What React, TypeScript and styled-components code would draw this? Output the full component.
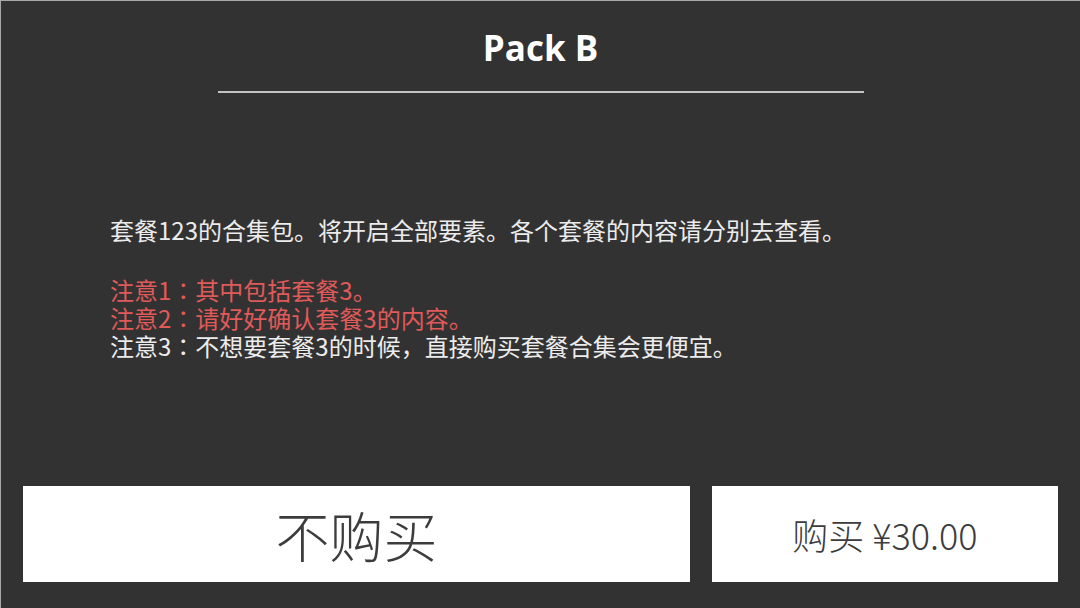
import styled, { createGlobalStyle } from 'styled-components';

const GlobalStyle = createGlobalStyle`
  html, body {
    margin: 0;
    padding: 0;
    background: #323232;
  }
  * {
    box-sizing: border-box;
  }
`;

const Panel = styled.div`
  width: 1080px;
  height: 608px;
  display: flex;
  flex-direction: column;
  background: #323232;
  border-top: 1px solid #a8a8a8;
  border-left: 1px solid #a8a8a8;
  font-family: "Noto Sans CJK SC", "Noto Sans", sans-serif;
`;

const Header = styled.div`
  display: flex;
  flex-direction: column;
  align-items: center;
  padding-top: 23px;
`;

const Title = styled.h1`
  margin: 0;
  font-family: "Open Sans", "Noto Sans", sans-serif;
  font-weight: 700;
  font-size: 35px;
  line-height: 48px;
  color: #ffffff;
`;

const Rule = styled.div`
  width: 646px;
  height: 2px;
  margin-top: 19px;
  background: #c4c4c4;
`;

const Body = styled.div`
  flex: 1;
  display: flex;
  flex-direction: column;
  justify-content: center;
  padding: 0 0 4px 109px;
`;

const Para = styled.p<{ $gap?: number }>`
  margin: 0 0 ${p => p.$gap ?? 0}px 0;
  font-size: 24px;
  line-height: 28px;
  color: #ececec;
`;

const Line = styled.div<{ $warn?: boolean }>`
  font-size: 24px;
  line-height: 28px;
  color: ${p => (p.$warn ? '#e05a5a' : '#ececec')};
`;

// centred full-width colon, as in the reference
const Colon = styled.span`
  font-family: "Noto Sans CJK JP", "Noto Sans CJK SC", sans-serif;
`;

const Actions = styled.div`
  display: flex;
  gap: 22px;
  padding: 0 22px 26px 22px;
`;

const ActionButton = styled.button<{ $wide?: boolean; $size: number }>`
  flex: ${p => (p.$wide ? '0 0 667px' : '1')};
  height: 96px;
  border: none;
  border-radius: 0;
  background: #ffffff;
  color: #3c3c3c;
  font-family: "Noto Sans CJK SC", "Noto Sans", sans-serif;
  font-weight: 300;
  font-size: ${p => p.$size}px;
  display: flex;
  align-items: center;
  justify-content: center;
  padding: 0;
  cursor: pointer;
`;

export default function App() {
  return (
    <>
      <GlobalStyle />
      <Panel>
        <Header>
          <Title>Pack B</Title>
          <Rule />
        </Header>
        <Body>
          <Para $gap={32}>套餐123的合集包。将开启全部要素。各个套餐的内容请分别去查看。</Para>
          <Line $warn>注意1<Colon>：</Colon>其中包括套餐3。</Line>
          <Line $warn>注意2<Colon>：</Colon>请好好确认套餐3的内容。</Line>
          <Line>注意3<Colon>：</Colon>不想要套餐3的时候，直接购买套餐合集会更便宜。</Line>
        </Body>
        <Actions>
          <ActionButton $wide $size={54}>不购买</ActionButton>
          <ActionButton $size={36}>购买 ¥30.00</ActionButton>
        </Actions>
      </Panel>
    </>
  );
}
